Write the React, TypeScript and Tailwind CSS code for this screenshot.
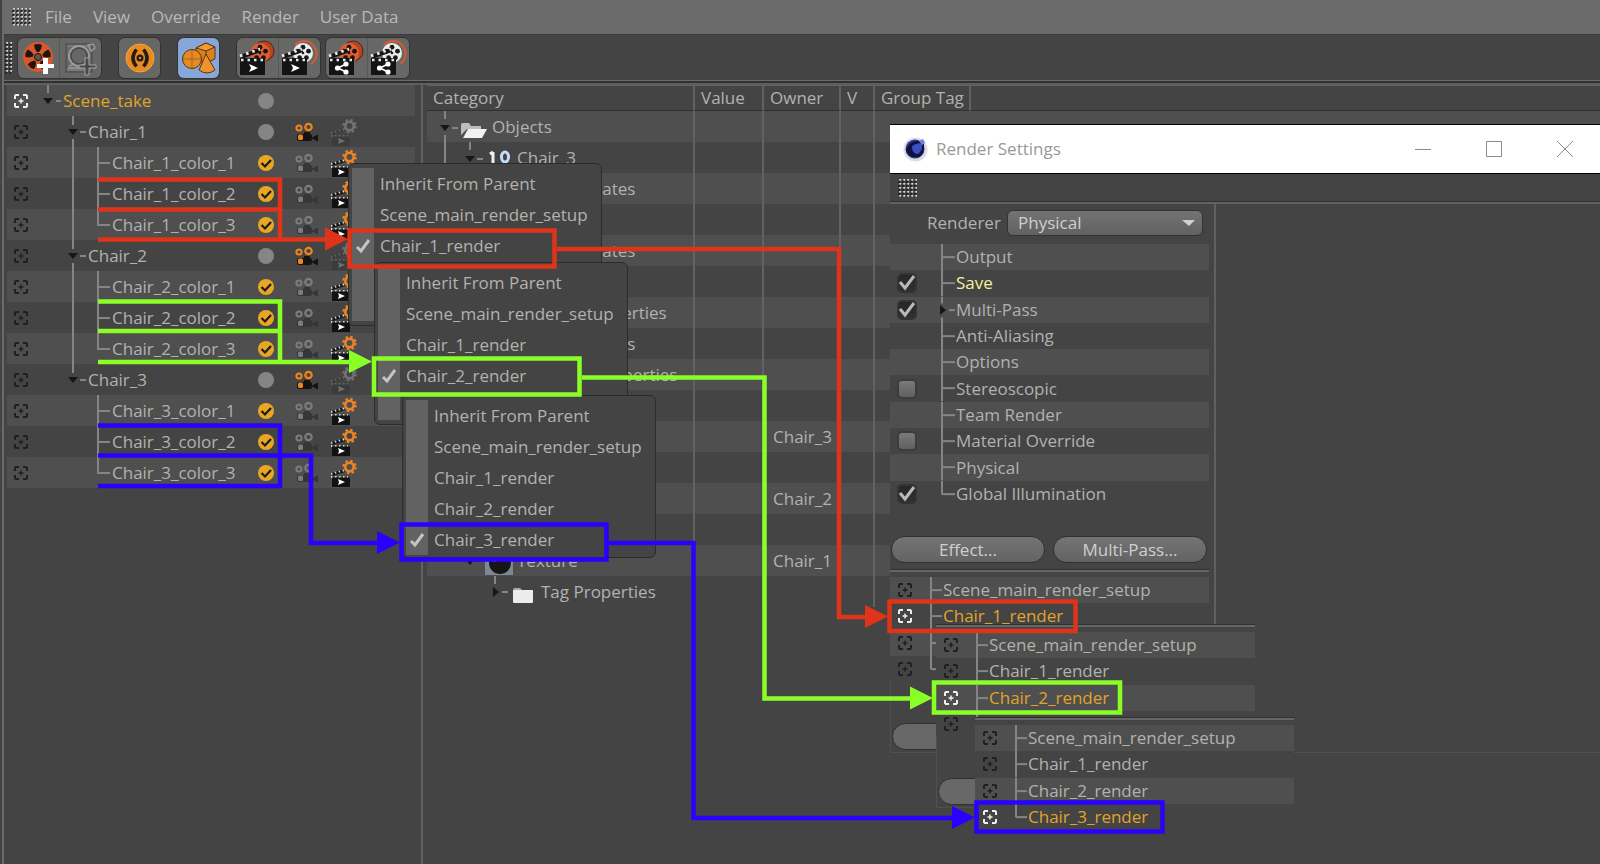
import { useId, useState } from "react";
import type { ReactNode } from "react";

type NodeKind = "root" | "group" | "leaf" | "last";

type Take = {
  name: string;
  kind: NodeKind;
  trunk?: boolean;
};

const takes: Take[] = [
  { name: "Scene_take", kind: "root" },
  { name: "Chair_1", kind: "group", trunk: true },
  { name: "Chair_1_color_1", kind: "leaf", trunk: true },
  { name: "Chair_1_color_2", kind: "leaf", trunk: true },
  { name: "Chair_1_color_3", kind: "last", trunk: true },
  { name: "Chair_2", kind: "group", trunk: true },
  { name: "Chair_2_color_1", kind: "leaf", trunk: true },
  { name: "Chair_2_color_2", kind: "leaf", trunk: true },
  { name: "Chair_2_color_3", kind: "last", trunk: true },
  { name: "Chair_3", kind: "group" },
  { name: "Chair_3_color_1", kind: "leaf" },
  { name: "Chair_3_color_2", kind: "leaf" },
  { name: "Chair_3_color_3", kind: "last" },
];

type Override = { label: string; icon: "folder" | "null" | "material" | "closed" | "none"; owner?: string };

const overrides: Override[] = [
  { label: "Objects", icon: "folder" },
  { label: "Chair_3", icon: "null" },
  { label: "Coordinates", icon: "none" },
  { label: "", icon: "none" },
  { label: "Coordinates", icon: "none" },
  { label: "", icon: "none" },
  { label: "Basic Properties", icon: "none" },
  { label: "Coordinates", icon: "none" },
  { label: "Object Properties", icon: "none" },
  { label: "", icon: "none" },
  { label: "", icon: "none", owner: "Chair_3" },
  { label: "", icon: "none" },
  { label: "", icon: "none", owner: "Chair_2" },
  { label: "", icon: "none" },
  { label: "Texture", icon: "material", owner: "Chair_1" },
  { label: "Tag Properties", icon: "closed" },
];

const settings: { label: string; check?: boolean; active?: boolean; caret?: boolean }[] = [
  { label: "Output" },
  { label: "Save", check: true, active: true },
  { label: "Multi-Pass", check: true, caret: true },
  { label: "Anti-Aliasing" },
  { label: "Options" },
  { label: "Stereoscopic", check: false },
  { label: "Team Render" },
  { label: "Material Override", check: false },
  { label: "Physical" },
  { label: "Global Illumination", check: true },
];

const renderSetups = ["Scene_main_render_setup", "Chair_1_render", "Chair_2_render", "Chair_3_render"];

function Grip({ className }: { className: string }) {
  const id = useId();
  return (
    <svg className={className} aria-hidden="true">
      <defs>
        <pattern id={id} width="4" height="4" patternUnits="userSpaceOnUse">
          <path d="M0 4L4 0" stroke="#1c1c1c" strokeWidth="1.500" />
          <path d="M1.500 1.500L3 0" stroke="#d8d8d8" strokeWidth="1.800" />
        </pattern>
      </defs>
      <rect width="100%" height="100%" fill={`url(#${id})`} />
    </svg>
  );
}

function TargetIcon({ active }: { active?: boolean }) {
  const c = active ? "#efefef" : "#202020";
  return (
    <svg width="14" height="14" viewBox="0 0 14 14" fill="none" stroke={c} strokeWidth="2" aria-hidden="true">
      <path d="M1 5V1.800L1.800 1H5M9 1h3.200L13 1.800V5M13 9v3.200L12.200 13H9M5 13H1.800L1 12.200V9" />
      <path d="M7 4.500v5M4.500 7h5" strokeWidth="1.500" />
    </svg>
  );
}

// Guide lines of the take tree, one 31px slice per row
function TakeGuides({ kind, trunk }: { kind: NodeKind; trunk?: boolean }) {
  if (kind === "root") {
    return (
      <svg className="h-[31px] w-[56px] shrink-0" stroke="#858585" strokeWidth="2" aria-hidden="true">
        <path d="M41 0v8M49 16h5" />
        <path d="M36 13h10l-5 6z" fill="#161616" stroke="none" />
      </svg>
    );
  }
  if (kind === "group") {
    return (
      <svg className="h-[31px] w-[81px] shrink-0" stroke="#858585" strokeWidth="2" aria-hidden="true">
        <path d="M66 0v9M73 16h6" />
        {trunk && <path d="M66 23v8" />}
        <path d="M61 13h10l-5 6z" fill="#161616" stroke="none" />
      </svg>
    );
  }
  return (
    <svg className="h-[31px] w-[105px] shrink-0" stroke="#858585" strokeWidth="2" fill="none" aria-hidden="true">
      {trunk && <path d="M66 0v31" />}
      {kind === "leaf" ? <path d="M91 0v31M91 16h12" /> : <path d="M91 0v16h12" />}
    </svg>
  );
}

function CameraIcon({ on }: { on: boolean }) {
  const a = on ? "#f0851c" : "#7c7c7c";
  const b = on ? "#141414" : "#363636";
  return (
    <svg width="24" height="20" viewBox="0 0 24 20" aria-hidden="true">
      <circle cx="4" cy="6" r="2.600" fill="none" stroke={a} strokeWidth="2" />
      <circle cx="13.500" cy="5" r="3.200" fill="none" stroke={a} strokeWidth="2.200" />
      <rect x="2" y="12" width="15" height="7" rx="2" fill={b} />
      <rect x="3" y="12.500" width="5" height="5.500" rx="1.500" fill={a} />
      <path d="M16 16l7-3.500v7z" fill={b} />
      <rect x="9" y="10" width="6" height="3" fill={b} />
    </svg>
  );
}

function ClapperGearIcon({ on }: { on: boolean }) {
  const gear = on ? "#ea8424" : "#727272";
  const board = on ? "#121212" : "#3c3c3c";
  const strip = on ? "#d4d4d4" : "#6a6a6a";
  return (
    <svg width="26" height="28" viewBox="0 0 26 28" aria-hidden="true">
      <circle cx="18.500" cy="8" r="6" fill="none" stroke={gear} strokeWidth="2.500" strokeDasharray="2.400 2.310" />
      <circle cx="18.500" cy="8" r="4.200" fill="none" stroke={gear} strokeWidth="2.600" />
      <path d="M1 14l12-4 1 3-13 4z" fill={board} />
      <path d="M0 15l14-4" stroke={strip} strokeWidth="2" strokeDasharray="1.500 2.500" />
      <path d="M0 18h17" stroke={strip} strokeWidth="1.800" strokeDasharray="1.500 2.500" />
      <rect x="1" y="18.500" width="18" height="9.500" fill={board} />
      <path d="M7 20l7 3-7 3 1-3z" fill={on ? "#fff" : "#6f6f6f"} />
    </svg>
  );
}

function Reel({ x, y, r, fill, hub }: { x: number; y: number; r: number; fill: string; hub: string }) {
  const holes = [0, 1, 2, 3, 4].map((i) => {
    const t = ((i * 72 - 90) * Math.PI) / 180;
    return <circle key={i} cx={x + Math.cos(t) * r * 0.58} cy={y + Math.sin(t) * r * 0.58} r={r * 0.24} fill={hub} />;
  });
  return (
    <g>
      <circle cx={x} cy={y} r={r} fill={fill} />
      {holes}
      <circle cx={x} cy={y} r={r * 0.13} fill={hub} />
    </g>
  );
}

function NewTakeIcon() {
  return (
    <svg width="36" height="36" viewBox="0 0 36 36" aria-hidden="true">
      <circle cx="17" cy="17" r="15" fill="#d8572c" />
      {[0, 72, 144, 216, 288].map((a) => (
        <path key={a} d="M14 9l-1-4q4-2 8 0l-1 4-2 3h-2z" fill="#1d1510" transform={`rotate(${a} 17 17)`} />
      ))}
      <circle cx="17" cy="17" r="3.500" fill="#5d5650" stroke="#1d1510" />
      <path d="M22 18h5v6h6v4h-6v6h-5v-6h-6v-4h6z" fill="#fff" />
    </svg>
  );
}

function DisabledTakeIcon() {
  return (
    <svg width="36" height="36" viewBox="0 0 36 36" fill="none" aria-hidden="true">
      <path d="M3 4h26v28H3z" stroke="#505050" strokeWidth="1.500" />
      <path d="M4 6h24M4 30h22" stroke="#8c8c8c" />
      <circle cx="16" cy="16" r="10" stroke="#9a9a9a" strokeWidth="2" />
      <circle cx="16" cy="16" r="8" stroke="#474747" strokeWidth="1.500" />
      <path d="M25 5l5-1 2 4-4 3zM5 28h14M6 26l6-2" stroke="#9a9a9a" strokeWidth="1.500" />
      <path d="M22 18h4v7h7v3h-7v7h-4v-7h-6v-3h6z" fill="#484848" stroke="#a4a4a4" />
    </svg>
  );
}

function AutoTakeIcon() {
  return (
    <svg width="32" height="32" viewBox="0 0 32 32" fill="none" aria-hidden="true">
      <circle cx="16" cy="16" r="14" fill="#e68a24" stroke="#f4a640" />
      <path d="M12.500 7.500q-7 8.500 0 17M19.500 7.500q7 8.500 0 17" stroke="#231c12" strokeWidth="3.500" />
      <circle cx="16" cy="16" r="3.500" fill="#231c12" />
      <circle cx="16" cy="16" r="1.200" fill="#e68a24" />
    </svg>
  );
}

function ObjectsIcon() {
  return (
    <svg width="36" height="36" viewBox="0 0 36 36" stroke="#5a330c" strokeWidth="1" aria-hidden="true">
      <path d="M15 8l10-5 9 4v12l-9 4-10-4z" fill="#d9801f" />
      <path d="M15 8l10-5 9 4-9 4z" fill="#f09a34" />
      <path d="M25 11v12" />
      <circle cx="11" cy="19" r="9.500" fill="#e58a22" />
      <path d="M2 19h19M11 10v18" strokeOpacity="0.400" />
      <path d="M25 14l9 16q-8 6-16 0z" fill="#ee942a" />
    </svg>
  );
}

function ClapperIcon({ white, share }: { white?: boolean; share?: boolean }) {
  return (
    <svg width="38" height="36" viewBox="0 0 38 36" aria-hidden="true">
      {white ? (
        <>
          <path d="M14 5A12.500 12.500 0 1 1 30 24" fill="none" stroke="#d85a30" strokeWidth="2" />
          <Reel x={22} y={13} r={10} fill="#ececec" hub="#1a1a1a" />
        </>
      ) : (
        <>
          <circle cx="25" cy="11" r="10" fill="#b5441f" stroke="#54200f" />
          <Reel x={21} y={13} r={10} fill="#dd5f33" hub="#1d130e" />
        </>
      )}
      <path d="M1 15l20-7 1 4-20 7z" fill="#161616" />
      <path d="M1 16l20-7" stroke="#e8e8e8" strokeWidth="3" strokeDasharray="2.500 4" />
      <rect x="1" y="18" width="25" height="17" fill="#141414" />
      <path d="M2 20h24" stroke="#e8e8e8" strokeWidth="2.600" strokeDasharray="2.500 4" />
      {share ? (
        <g fill="#fff" stroke="#fff" strokeWidth="1.600">
          <path d="M18 24l-8 4 8 4" fill="none" />
          <circle cx="18" cy="24" r="1.800" />
          <circle cx="9.500" cy="28" r="1.800" />
          <circle cx="18" cy="32" r="1.800" />
        </g>
      ) : (
        <path d="M10 24l9 4-9 4 2-4z" fill="#fff" />
      )}
    </svg>
  );
}

function ToolButton({ label, children, pressed }: { label: string; children: ReactNode; pressed?: boolean }) {
  return (
    <button
      type="button"
      aria-label={label}
      className={
        pressed
          ? "flex h-10 w-[41px] items-center justify-center bg-[#87a7d9]"
          : "flex h-10 w-[41px] items-center justify-center bg-[#676866]"
      }
    >
      {children}
    </button>
  );
}

function ToolGroup({ children }: { children: ReactNode }) {
  return <div className="flex gap-px overflow-hidden rounded-md bg-[#585858] ring-1 ring-[#333]">{children}</div>;
}

function Toolbar() {
  return (
    <div className="flex h-[45px] items-center pl-px">
      <Grip className="h-8 w-2" />
      <div className="flex items-center pl-[5px]">
        <ToolGroup>
          <ToolButton label="New take"><NewTakeIcon /></ToolButton>
          <ToolButton label="New take from selection"><DisabledTakeIcon /></ToolButton>
        </ToolGroup>
        <div className="flex gap-[18px] px-[18px]">
          <ToolGroup>
            <ToolButton label="Auto take"><AutoTakeIcon /></ToolButton>
          </ToolGroup>
          <ToolGroup>
            <ToolButton label="Override objects" pressed><ObjectsIcon /></ToolButton>
          </ToolGroup>
        </div>
        <div className="flex gap-[6px]">
          <ToolGroup>
            <ToolButton label="Render marked takes"><ClapperIcon /></ToolButton>
            <ToolButton label="Render all takes"><ClapperIcon white /></ToolButton>
          </ToolGroup>
          <ToolGroup>
            <ToolButton label="Team render marked takes"><ClapperIcon share /></ToolButton>
            <ToolButton label="Team render all takes"><ClapperIcon white share /></ToolButton>
          </ToolGroup>
        </div>
      </div>
    </div>
  );
}

function TakeRow({ take }: { take: Take }) {
  const parent = take.kind === "root" || take.kind === "group";
  return (
    <li className="grid h-[31px] grid-cols-[251px_16px_24px_26px] items-center odd:bg-[#4f4f4f]">
      <div className="relative flex items-center">
        <span className="absolute left-[7px]">
          <TargetIcon active={take.kind === "root"} />
        </span>
        <TakeGuides kind={take.kind} trunk={take.trunk} />
        <span className={take.kind === "root" ? "text-[#e0a32c]" : ""}>{take.name}</span>
      </div>
      {parent ? (
        <span className="size-4 rounded-full bg-[#858585]" />
      ) : (
        <label className="grid size-4">
          <input
            type="checkbox"
            defaultChecked
            aria-label={`Mark ${take.name}`}
            className="col-start-1 row-start-1 size-4 appearance-none rounded-full bg-[#e8a624]"
          />
          <svg className="pointer-events-none col-start-1 row-start-1 size-4" fill="none" aria-hidden="true">
            <path d="M3.500 8l3.500 3.500L13 5" stroke="#1b1b1b" strokeWidth="2.200" />
          </svg>
        </label>
      )}
      {take.kind !== "root" && (
        <>
          <span className="pl-[21px]">
            <CameraIcon on={take.kind === "group"} />
          </span>
          <span className="pl-[33px]">
            <ClapperGearIcon on={take.kind !== "group"} />
          </span>
        </>
      )}
    </li>
  );
}

function OverrideLabel({ row }: { row: Override }) {
  if (row.icon === "folder") {
    return (
      <div className="flex items-center">
        <svg className="h-[31px] w-[65px]" aria-hidden="true">
          <path d="M18 0v8M18 24v7M25 17h6" stroke="#858585" strokeWidth="2" />
          <path d="M13 14h10l-5 6z" fill="#161616" />
          <path d="M34 24V14q0-2 2-2h6l2 3h10v3H40z" fill="#bdbdbd" />
          <path d="M41 18h19l-5 9H36z" fill="#f2f2f2" />
        </svg>
        Objects
      </div>
    );
  }
  if (row.icon === "null") {
    return (
      <div className="flex items-center">
        <svg className="h-[31px] w-[90px]" aria-hidden="true">
          <path d="M18 0v31M43 0v8M50 17h6" stroke="#858585" strokeWidth="2" />
          <path d="M38 14h10l-5 6z" fill="#161616" />
          <path d="M66 10v11M63 12l3-2" stroke="#f0f0f0" strokeWidth="3" />
          <ellipse cx="78" cy="15" rx="3.500" ry="5" fill="none" stroke="#c3dcf8" strokeWidth="3" />
        </svg>
        {row.label}
      </div>
    );
  }
  if (row.icon === "material") {
    return (
      <div className="flex items-center">
        <svg className="h-[31px] w-[90px]" aria-hidden="true">
          <path d="M38 14h10l-5 6z" fill="#161616" />
          <rect x="58" y="3" width="28" height="27" fill="#7d8893" />
          <circle cx="73" cy="18" r="11" fill="#161616" />
          <circle cx="68" cy="14" r="3" fill="#8a8a8a" />
        </svg>
        {row.label}
      </div>
    );
  }
  if (row.icon === "closed") {
    return (
      <div className="flex items-center">
        <svg className="h-[31px] w-[114px]" aria-hidden="true">
          <path d="M68 0v8M75 16h6" stroke="#858585" strokeWidth="2" />
          <path d="M66 11l6 5-6 5z" fill="#161616" />
          <path d="M86 14q0-2 2-2h5l2 2h11v12H86z" fill="#a9a9a9" />
          <rect x="86" y="14" width="20" height="13" rx="1" fill="#ececec" />
        </svg>
        {row.label}
      </div>
    );
  }
  return <div className="pl-[112px]">{row.label}</div>;
}

function OverrideTable() {
  const cell = "border-r-2 border-[#626262] p-0 pl-[6px] text-left font-normal";
  return (
    <table className="w-full table-fixed border-separate border-spacing-0">
      <colgroup>
        <col className="w-[268px]" />
        <col className="w-[69px]" />
        <col className="w-[77px]" />
        <col className="w-[34px]" />
        <col className="w-[96px]" />
        <col />
      </colgroup>
      <thead>
        <tr className="h-[26px]">
          {["Category", "Value", "Owner", "V", "Group Tag"].map((h) => (
            <th key={h} scope="col" className="border-t border-r-2 border-b border-t-[#626262] border-r-[#626262] border-b-[#303030] p-0 pl-[6px] text-left font-medium">
              {h}
            </th>
          ))}
          <td className="border-t border-b border-t-[#626262] border-b-[#303030]" />
        </tr>
      </thead>
      <tbody>
        {overrides.map((row, i) => (
          <tr key={i} className="h-[31px] whitespace-nowrap odd:bg-[#4f4f4f]">
            <td className="border-r-2 border-[#626262] p-0">
              <OverrideLabel row={row} />
            </td>
            <td className={cell} />
            <td className={cell}>
              <span className="pl-[3px] font-medium">{row.owner}</span>
            </td>
            <td className={cell} />
            <td />
            <td />
          </tr>
        ))}
      </tbody>
    </table>
  );
}

function SetupMenu({ className, selected, count }: { className: string; selected: string; count: number }) {
  const items = ["Inherit From Parent", ...renderSetups].slice(0, count);
  return (
    <div
      role="menu"
      className={`absolute flex h-[163px] w-[254px] flex-col rounded-md border border-[#2c2c2c] bg-[#444] px-[3px] py-1 ${className}`}
    >
      <div className="flex flex-1 flex-col bg-linear-to-r from-[#626262] from-[22px] to-[#444] to-[22px]">
        {items.map((item) => (
          <button key={item} type="button" role="menuitemradio" aria-checked={item === selected} className="flex h-[31px] items-center text-left">
            <span className="flex w-7 pl-[3px]">
              {item === selected && (
                <svg width="16" height="16" fill="none" aria-hidden="true">
                  <path d="M2 9l4 4 8-11" stroke="#c4c4c4" strokeWidth="3" />
                </svg>
              )}
            </span>
            {item}
          </button>
        ))}
      </div>
    </div>
  );
}

function SettingRow({ index }: { index: number }) {
  const s = settings[index];
  const id = useId();
  const last = index === settings.length - 1;
  return (
    <div className="flex items-center odd:bg-[#4f4f4f]">
      <span className="grid w-[52px] pl-[7px]">
        {s.check !== undefined && (
          <>
            <input
              id={id}
              type="checkbox"
              defaultChecked={s.check}
              className="peer col-start-1 row-start-1 size-5 appearance-none rounded-[5px] border-2 border-[#3c3c3c] bg-linear-to-b from-[#7a7a7a] to-[#606060] checked:border-[#343434] checked:from-[#262626] checked:to-[#303030]"
            />
            <svg className="pointer-events-none invisible col-start-1 row-start-1 size-5 peer-checked:visible" fill="none" aria-hidden="true">
              <path d="M3 9l5 6 9-12" stroke="#b8b8b8" strokeWidth="3" />
            </svg>
          </>
        )}
      </span>
      <svg className="h-full w-[14px]" overflow="visible" stroke="#858585" strokeWidth="2" aria-hidden="true">
        {s.caret ? (
          <>
            <line x1="0" y1="0" x2="0" y2="25%" />
            <line x1="0" y1="78%" x2="0" y2="100%" />
            <line x1="7" y1="50%" x2="13" y2="50%" />
            <path d="M-2 8l6 5-6 5z" fill="#161616" stroke="none" />
          </>
        ) : (
          <>
            <line x1="0" y1="0" x2="0" y2={last ? "50%" : "100%"} />
            <line x1="0" y1="50%" x2="13" y2="50%" />
          </>
        )}
      </svg>
      <label htmlFor={s.check !== undefined ? id : undefined} className={s.active ? "text-[#f2f29a]" : ""}>
        {s.label}
      </label>
    </div>
  );
}

// The setups below the active one lie under the next pane, so only their target icons are drawn
function SetupList({ active, footer, className }: { active: string; footer?: boolean; className: string }) {
  const activeIndex = renderSetups.indexOf(active);
  return (
    <section className={`absolute w-[319px] overflow-hidden bg-[#444] ${className}`}>
      <div className="border-t border-[#303030]">
        <div className="border-t-2 border-[#666]" />
      </div>
      <ul className="mt-[5px] grid h-[105px] auto-rows-fr">
        {renderSetups.map((name, i) => (
          <li key={name} className="flex items-center odd:bg-[#4f4f4f]">
            <button
              type="button"
              aria-label={name}
              className={name === active ? "flex h-full items-center text-[#e0a32c]" : "flex h-full items-center"}
            >
              <span className="w-[41px] pl-2">
                <TargetIcon active={name === active} />
              </span>
              <svg className="h-full w-3" overflow="visible" stroke="#858585" strokeWidth="2" aria-hidden="true">
                <line x1="0" y1="0" x2="0" y2={i === 3 ? "50%" : "100%"} />
                <line x1="0" y1="50%" x2="11" y2="50%" />
              </svg>
              {i <= activeIndex && name}
            </button>
          </li>
        ))}
      </ul>
      {footer && (
        <div className="flex border-b border-l border-[#505050] pt-[41px] pb-[2px] pl-px">
          <button type="button" aria-label="Render Setting..." className="h-[27px] w-[200px] rounded-full border border-[#303030] bg-[#686868]" />
        </div>
      )}
    </section>
  );
}

function RenderSettings() {
  const [renderer, setRenderer] = useState("Physical");
  const pill = "h-[27px] flex-1 rounded-full border border-[#303030] bg-linear-to-b from-[#747474] to-[#636363] text-[#cfcfcf]";
  return (
    <section className="absolute top-[124px] right-0 left-[890px] flex h-[629px] flex-col border-b border-[#505050] bg-[#444]">
      <header className="flex h-[50px] items-center border-y border-black bg-white pr-[26px] pl-[13px]">
        <svg width="25" height="25" viewBox="0 0 25 25" aria-hidden="true">
          <circle cx="12.500" cy="12.500" r="12" fill="#dcdce2" />
          <circle cx="12" cy="12" r="9.500" fill="#2b3a8f" />
          <path d="M3 13Q6 4 15 4l6 3q1 9-5 13-10 2-13-7z" fill="#10123a" />
          <path d="M9 9q6-4 10-2 1 6-4 10-6 0-6-8z" fill="#3c50c4" />
          <path d="M16 4l4-2 2 4-3 2z" fill="#6f7fe0" />
        </svg>
        <h2 className="flex-1 pl-2 font-normal text-[#999]">Render Settings</h2>
        <div className="flex gap-[54px] text-[#8b8b8b]">
          <button type="button" aria-label="Minimize">
            <svg width="17" height="17" stroke="currentColor" aria-hidden="true"><path d="M0 8.500h16" /></svg>
          </button>
          <button type="button" aria-label="Maximize">
            <svg width="17" height="17" stroke="currentColor" fill="none" aria-hidden="true"><path d="M.5.5h15v15H.5z" /></svg>
          </button>
          <button type="button" aria-label="Close">
            <svg width="17" height="17" stroke="currentColor" aria-hidden="true"><path d="M0 0l16 16M16 0L0 16" /></svg>
          </button>
        </div>
      </header>
      <div className="flex h-7 items-center border-b border-[#303030] pl-2">
        <Grip className="h-[18px] w-[19px]" />
      </div>
      <div className="flex flex-1 border-t-2 border-[#626262]">
        <div className="w-[319px]">
          <div className="flex h-[37px] items-center pl-[37px]">
            <label htmlFor="renderer" className="w-20">Renderer</label>
            <span className="grid w-[196px] items-center">
              <select
                id="renderer"
                value={renderer}
                onChange={(e) => setRenderer(e.target.value)}
                className="col-start-1 row-start-1 h-[26px] appearance-none rounded-md border border-[#333] bg-linear-to-b from-[#737373] to-[#616161] pl-[10px] text-[#cfcfcf]"
              >
                <option>Physical</option>
                <option>Standard</option>
              </select>
              <svg className="pointer-events-none col-start-1 row-start-1 mr-2 h-2 w-[13px] justify-self-end" aria-hidden="true">
                <path d="M0 1h13L7 7z" fill="#d0d0d0" />
              </svg>
            </span>
          </div>
          <div className="mt-[3px] grid h-[263px] auto-rows-fr">
            {settings.map((s, i) => (
              <SettingRow key={s.label} index={i} />
            ))}
          </div>
          <div className="flex gap-2 pt-[29px] pr-[2px] pl-px">
            <button type="button" className={pill}>Effect...</button>
            <button type="button" className={pill}>Multi-Pass...</button>
          </div>
        </div>
        <div className="ml-[5px] flex-1 border-l-2 border-[#606060]" />
      </div>
    </section>
  );
}

function Connectors() {
  return (
    <svg className="pointer-events-none absolute inset-0 h-full w-full" fill="none" strokeWidth="4.500" aria-hidden="true">
      <g stroke="#e0341a">
        <path d="M98 179.500h182v60M98 209.500h182M98 239.500h229M349.500 230.500h205v36h-205zM557 249h282v368h28M889.500 601.500h186v29.500h-186z" />
        <path d="M325 227.500v23l23-11.500zM865 605v23l23-11.500z" fill="#e0341a" stroke="none" />
      </g>
      <g stroke="#8aff26">
        <path d="M98 301.500h182v61M98 331h182M98 362h253M374 358.500h205.500v36H374zM582 377.500h182.500V698.500h147M934 682.500h186v30H934z" />
        <path d="M349 350v23l23-11.500zM910 686.500v23l23-11.500z" fill="#8aff26" stroke="none" />
      </g>
      <g stroke="#2a00ff">
        <path d="M98 425.500h182V486H98M98 455.500h213V543h68M401.500 524.500h205v35h-205zM609 543h84.500V818H955M976.500 802.500h186v29h-186z" />
        <path d="M377 531v23l23-11.500zM952 806v23l23-11.500z" fill="#2a00ff" stroke="none" />
      </g>
    </svg>
  );
}

export default function App() {
  return (
    <main className="relative flex min-h-screen flex-col overflow-hidden bg-[#444] pl-[2px] font-['Open_Sans',sans-serif] text-[17px] leading-6 font-medium text-[#b2b2ae]">
      <div className="flex flex-1 flex-col border-l-2 border-[#6a6a6a]">
        <nav className="flex h-[34px] items-center bg-[#6b6b6b] pl-2 text-[#b9b9b9]">
          <Grip className="h-[18px] w-[19px]" />
          <div className="flex gap-[21px] pl-[14px]">
            {["File", "View", "Override", "Render", "User Data"].map((m) => (
              <button key={m} type="button">{m}</button>
            ))}
          </div>
        </nav>
        <div className="border-t border-b border-t-[#3a3a3a] border-b-[#6a6a6a]">
          <Toolbar />
        </div>
        <div className="border-t-2 border-b-2 border-t-[#303030] border-b-[#5f5f5f]" />
        <div className="flex flex-1">
          <ul className="w-[411px] pr-0 pl-[3px]">
            {takes.map((t) => (
              <TakeRow key={t.name} take={t} />
            ))}
          </ul>
          <div className="ml-[6px] min-w-0 flex-1 border-l-2 border-[#626262] pl-1">
            <OverrideTable />
          </div>
        </div>
      </div>

      <SetupMenu className="top-[163px] left-[348px]" selected="Chair_1_render" count={3} />
      <SetupMenu className="top-[262px] left-[374px]" selected="Chair_2_render" count={4} />
      <SetupMenu className="top-[395px] left-[402px]" selected="Chair_3_render" count={5} />

      <RenderSettings />
      <SetupList className="top-[569px] left-[890px]" active="Chair_1_render" footer />
      <SetupList className="top-[624px] left-[936px]" active="Chair_2_render" footer />
      <SetupList className="top-[717px] left-[975px] h-[142px]" active="Chair_3_render" />

      <Connectors />
    </main>
  );
}
